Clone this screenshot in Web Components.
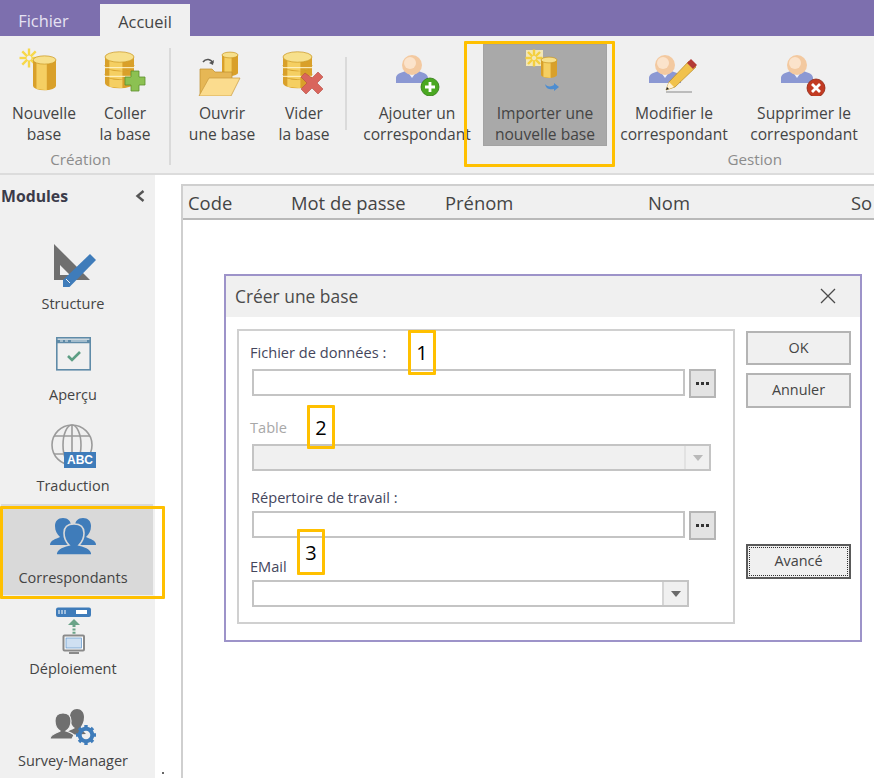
<!DOCTYPE html>
<html lang="fr"><head><meta charset="utf-8"><title>Créer une base</title>
<style>
html,body{margin:0;padding:0;background:#fff;overflow:hidden}
body{font-family:"Open Sans","Noto Sans",sans-serif;color:#444}
</style></head><body>
<x-app></x-app>
<script>
const CYL=(x,y,w,h)=>{const ry=w*0.18;return `<path d="M${x} ${y}V${y+h}A${w/2} ${ry} 0 0 0 ${x+w} ${y+h}V${y}Z" fill="#d9a02a"/><path d="M${x+w*.15} ${y+1}V${y+h+ry*.7}L${x+w*.6} ${y+h+ry}V${y+1}Z" fill="#f5cf62"/><ellipse cx="${x+w/2}" cy="${y}" rx="${w/2}" ry="${ry}" fill="#f7e08c" stroke="#c9951f" stroke-width=".7"/>`};
const STACK=(x,y,w,h)=>{const s=h/3;let o='';for(let i=2;i>=0;i--){o+=CYL(x,y+i*s,w,s)}return o+`<path d="M${x} ${y+s+2}h${w}M${x} ${y+2*s+2}h${w}" stroke="#fff6d0" stroke-width="1"/>`};
const STAR=(cx,cy,r,c='#f7d84a')=>{let o='';for(let i=0;i<8;i++){const a=i*Math.PI/4;o+=`<path d="M${cx+Math.cos(a)*r*.25} ${cy+Math.sin(a)*r*.25}L${cx+Math.cos(a)*r} ${cy+Math.sin(a)*r}" stroke="${c}" stroke-width="2.4"/>`}return o};
const PERSON=(cx,cy)=>`<path d="M${cx-16} ${cy+18}v-5c0-3 3-5 7-6l5-2h8l5 2c4 1 7 3 7 6v5z" fill="#8b98d3"/><path d="M${cx-5} ${cy+6}L${cx} ${cy+13}L${cx+5} ${cy+6}z" fill="#eef0fa"/><circle cx="${cx}" cy="${cy}" r="10" fill="#f3c9a0"/><circle cx="${cx-2}" cy="${cy-2}" r="6" fill="#fbe3cb"/>`;
const ic=(vb,w,h,body)=>`<svg slot="icon" viewBox="${vb}" width="${w}" height="${h}" aria-hidden="true">${body}</svg>`;
const RIB={
 nouvelle:ic('14 46 60 50',60,50,STAR(29,58,9.5)+CYL(33,60,23,26)),
 coller:ic('95 46 60 50',60,50,STACK(105,57,29,26)+`<path d="M131 71h8v6h6v8h-6v6h-8v-6h-6v-8h6z" fill="#8cc152" stroke="#5e8f2f" stroke-width=".8"/>`),
 ouvrir:ic('192 46 60 50',60,50,`<path d="M203 62c3-4 8-3 10 1" fill="none" stroke="#555" stroke-width="1.6"/><path d="M214 60l-1 5-4-2z" fill="#555"/>`+CYL(222,55,16,18)+`<path d="M200 96V69h12l3 3h17v7H211z" fill="#e6b755" stroke="#bd8c2c" stroke-width=".7"/><path d="M199 96l10-18h31l-9 18z" fill="#fbdc8e" stroke="#c99a3c" stroke-width=".7"/>`),
 vider:ic('274 46 60 50',60,50,STACK(283,57,29,26)+`<path d="M305 77l7 5 6-6 5 5-6 6 6 6-5 5-6-6-6 6-5-5 6-6-6-6z" fill="#d9655c" stroke="#b5493f" stroke-width=".6" transform="translate(0 -4)"/>`),
 ajouter:ic('387 46 60 50',60,50,PERSON(412,65)+`<circle cx="430" cy="87" r="9" fill="#4aa821" stroke="#2f7a12" stroke-width=".8"/><path d="M425 87h10M430 82v10" stroke="#fff" stroke-width="2.8"/>`),
 importer:ic('515 46 60 50',60,50,`<rect x="526" y="52" width="17" height="16" fill="#f3e7b5"/>`+STAR(534,60,8.5,'#f4cf3f')+CYL(541,62,16,15)+`<path d="M545 86c2 3 6 3 9 1v-2l5 4-5 4v-2c-4 1-8 0-9-5z" fill="#4d8dd0"/>`),
 modifier:ic('644 46 60 50',60,50,PERSON(665,65)+`<path d="M666 90l3-8 20-21 7 6-21 20z" fill="#f1c24c" stroke="#b78a24" stroke-width=".7"/><path d="M687 63l4-4 6 6-4 4z" fill="#b33b36"/><path d="M666 90l3-8 5 5z" fill="#fff1d4"/><path d="M666 92h26" stroke="#888" stroke-width="1"/><path d="M666 90l1-3 2 2z" fill="#222"/>`),
 supprimer:ic('774 46 60 50',60,50,PERSON(797,65)+`<circle cx="816" cy="88" r="9" fill="#c23a22" stroke="#8f2612" stroke-width=".8"/><path d="M812 84l8 8M820 84l-8 8" stroke="#fff" stroke-width="2.8"/>`)
};
const B='#3f7cba',G='#6f6f6f';
const MOD={
 structure:ic('43 240 60 50',60,50,`<path fill-rule="evenodd" d="M54 244L90 280H54ZM60 265V275H70Z" fill="${G}"/><path d="M63 287V280L90 254 96 260 69.5 287Z" fill="${B}"/><path d="M66 279l4 4" stroke="#f0f0f0" stroke-width="1"/>`),
 apercu:ic('43 332 60 50',60,50,`<rect x="56.8" y="338.8" width="33.4" height="32" fill="none" stroke="#5f8ba8" stroke-width="1.6"/><path d="M57 342.5h33" stroke="#5f8ba8" stroke-width="3.4"/><path d="M60 342h3M65 342h3M71 342h16" stroke="#e8eef2" stroke-width="1"/><path d="M68 357l4 4 8-8" fill="none" stroke="#5d9e84" stroke-width="2.6"/>`),
 traduction:ic('43 424 60 50',60,50,`<g fill="none" stroke="#9b9b9b" stroke-width="1.6"><circle cx="72" cy="447" r="20"/><ellipse cx="72" cy="447" rx="9" ry="20"/><path d="M54 438h36M54 456h36M72 427v40"/></g><rect x="64" y="454" width="32" height="16" fill="${B}"/><text x="80" y="466" text-anchor="middle" font-family="Liberation Sans" font-weight="700" font-size="12" fill="#fff">ABC</text>`),
 correspondants:ic('43 516 60 50',60,50,`<g fill="${B}"><path d="M50 547c0-5 6-6 10-8-3-3-5-6-5-11 0-5 3-8 8-8s8 3 8 8c0 5-2 9-5 11l10 8z"/><path d="M96 547c0-5-6-6-10-8 3-3 5-6 5-11 0-5-3-8-8-8s-8 3-8 8c0 5 2 9 5 11l-10 8z"/><path d="M56 557c0-6 5-8 13-10-3-3-5-7-5-12 0-6 4-9 10-9s10 3 10 9c0 5-2 9-5 12 8 2 13 4 13 10z" stroke="#d9d9d9" stroke-width="1.6"/></g>`),
 deploiement:ic('43 606 60 50',60,50,`<rect x="56" y="608.5" width="35" height="9.5" rx="2" fill="${B}"/><path d="M59 611v4M62 611v4M65 611v4" stroke="#fff" stroke-width="1"/><rect x="76" y="611" width="11" height="4" fill="#fff"/><path d="M68 626l6-6 6 6z" fill="#6aa388"/><path d="M74 626v9" stroke="#6aa388" stroke-width="3" stroke-dasharray="2 1.4"/><rect x="63.5" y="636.5" width="20.5" height="15" rx="1" fill="#fff" stroke="#8a8a8a" stroke-width="2"/><rect x="66" y="639" width="15.5" height="10" fill="#cfe0f2" stroke="#5c93c9" stroke-width=".7"/><path d="M69 654h10" stroke="#8a8a8a" stroke-width="2"/>`),
 survey:ic('43 698 60 50',60,50,`<g fill="${G}"><path d="M66 736c0-4 6-5 9-7-3-2-5-6-5-11 0-5 3-8 7-8s7 3 7 8c0 5-2 8-4 11l6 6z"/><path d="M50 740c0-5 7-6 10-8-3-2-5-5-5-10 0-5 3-8 8-8s8 3 8 8c0 5-2 8-5 10 3 1 6 2 8 4l-2 4z" stroke="#f0f0f0" stroke-width="1.2"/></g><g transform="translate(86 736)"><circle r="6.3" fill="none" stroke="${B}" stroke-width="4"/><g stroke="${B}" stroke-width="3.4"><path d="M0-10V-7M0 7v3M-10 0h3M7 0h3M-7-7l2 2M5 5l2 2M7-7l-2 2M-5 5l-2 2"/></g></g>`)
};
function def(name,css,html){
 customElements.define(name,class extends HTMLElement{
  constructor(){super();const r=this.attachShadow({mode:'open'});r.innerHTML=`<style>${css}</style>${html}`}
 });
}
def('x-tab',`:host{display:flex;align-items:center;justify-content:center;box-sizing:border-box;height:32px;font-size:16.4px;color:#e6e2f2;width:var(--w,auto)}
:host([active]){background:#f0f0f0;color:#444;padding-top:3px}`,`<slot></slot>`);
def('x-ribbon-button',`:host{display:flex;flex-direction:column;align-items:center;height:102px;color:#444;font-size:15.6px;line-height:21px;text-align:center;white-space:nowrap}
:host([hot]){background:#a9a9a9;box-shadow:inset 0 0 0 1px #a3a3a3}
.i{height:57px;display:flex;justify-content:center;margin-top:var(--it,2px)}
.t{margin-top:var(--tt,0px)}`,`<div class="i"><slot name="icon"></slot></div><div class="t"><slot></slot></div>`);
def('x-ribbon-group',`:host{display:flex;flex-direction:column;height:137px;flex:none;box-sizing:border-box}
.r{display:flex;height:113px;align-items:flex-start;padding-top:8px;box-sizing:border-box}
.l{font-size:15.2px;color:#8c8c8c;line-height:20px;text-align:var(--lalign,center);padding:0 var(--lpad,0) 0 0}`,`<div class="r"><slot></slot></div><div class="l"><slot name="label"></slot></div>`);
def('x-ribbon',`:host{display:flex;height:139px;background:#f0f0f0;box-sizing:border-box;border-bottom:2px solid #dcdcdc;flex:none}`,`<slot></slot>`);
def('x-sep',`:host{display:block;width:2px;background:#dadada;flex:none;margin-top:var(--st,12px);height:var(--sh,117px)}`,``);
def('x-module',`:host{display:flex;flex-direction:column;align-items:center;height:92px;font-size:14.5px;color:#444;box-sizing:border-box;padding:10px 8px 0 0;margin-left:1px;width:152px}
:host([active]){background:#d9d9d9}
.i{height:53px}.t{line-height:21px;white-space:nowrap}`,`<div class="i"><slot name="icon"></slot></div><div class="t"><slot></slot></div>`);
def('x-sidebar',`:host{display:flex;flex-direction:column;width:155px;flex:none;background:#f0f0f0}
.h{display:flex;justify-content:space-between;align-items:center;height:55px;box-sizing:border-box;padding:0 9px 12px 1px;font-weight:700;font-size:15.8px;color:#3b3b4a}
svg{display:block}`,`<div class="h"><span>Modules</span><svg width="12" height="14" viewBox="0 0 12 14"><path d="M9.5 2L3.5 7l6 5" fill="none" stroke="#555" stroke-width="2.4"/></svg></div><slot></slot>`);
def('x-grid',`:host{display:block;flex:1;margin:9px 0 0 26px;border-left:2px solid #cfcfcf;overflow:hidden}
.h{display:flex;height:36px;align-items:center;box-sizing:border-box;background:#f0f0f0;border-top:2px solid #cfcfcf;border-bottom:2px solid #b9b9b9;padding-top:1px;font-size:18.4px;color:#444;white-space:nowrap}
span{flex:none}`,`<div class="h"><span style="width:108px;padding-left:5px;box-sizing:border-box">Code</span><span style="width:154px">Mot de passe</span><span style="width:203px">Prénom</span><span style="width:203px">Nom</span><span>So</span></div>`);
def('x-input',`:host{display:block;box-sizing:border-box;height:27px;width:var(--w,433px);background:#fff;border:2px solid #c4c4c4}`,``);
def('x-browse',`:host{display:flex;align-items:center;justify-content:center;box-sizing:border-box;width:27px;height:29px;background:#e3e3e3;border:2px solid #b5b5b5;margin-left:4px}
svg{display:block}`,`<svg width="14" height="4" viewBox="0 0 14 4"><g fill="#333"><rect x="0" y="0" width="3" height="3"/><rect x="5" y="0" width="3" height="3"/><rect x="10" y="0" width="3" height="3"/></g></svg>`);
def('x-select',`:host{display:flex;box-sizing:border-box;height:27px;width:var(--w,437px);border:2px solid #c4c4c4;background:#fff}
:host([disabled]){background:#f0f0f0}
.f{flex:1}.a{width:23px;border-left:2px solid #d5d5d5;background:#f0f0f0;display:flex;align-items:center;justify-content:center}
:host([disabled]) .a{border-left-color:#e2e2e2}
i{display:block;border:5px solid transparent;border-top:6px solid #6a6a6a;border-bottom:0}
:host([disabled]) i{border-top-color:#b9b9b9}`,`<div class="f"></div><div class="a"><i></i></div>`);
def('x-field',`:host{display:block;padding-left:var(--pl,11px);margin-top:var(--mt,0)}
.l{font-size:14.6px;line-height:20px;color:#44465c;white-space:nowrap;margin-bottom:var(--mb,7px);margin-left:var(--ll,0)}
:host([disabled]) .l{color:#a8a8a8}
.c{display:flex;align-items:flex-start;padding-left:2px}`,`<div class="l"><slot name="label"></slot></div><div class="c"><slot></slot></div>`);
def('x-button',`:host{display:flex;align-items:center;justify-content:center;box-sizing:border-box;width:105px;height:var(--bh,35px);background:#f0f0f0;border:2px solid #b4b4b4;padding-bottom:2px;font-size:14.4px;color:#444;margin-bottom:var(--bm,8px);margin-top:var(--tm,0)}
:host([default]){border-color:#5a5a5a;position:relative}
.d{display:none}
:host([default]) .d{display:block;position:absolute;inset:1px;border:1.5px dotted #333}`,`<div class="d"></div><slot></slot>`);
def('x-fieldset',`:host{display:block;box-sizing:border-box;width:498px;height:295px;border:2px solid #d0d0d0;background:#fff;padding-top:11px;flex:none}`,`<slot></slot>`);
def('x-dialog',`:host{display:block;position:absolute;left:224px;top:274px;width:638px;height:368px;box-sizing:border-box;border:2px solid #9d93c9;background:#fff}
.t{display:flex;justify-content:space-between;align-items:center;box-sizing:border-box;height:41px;background:#f0f0f0;padding:0 24px 2px 9px;font-size:17.4px;color:#4b4b4b}
.b{display:flex;gap:11px;padding:12px 0 0 11px}
.s{display:flex;flex-direction:column;padding-top:2px}
svg{display:block}`,`<div class="t"><span>Créer une base</span><svg width="16" height="16" viewBox="0 0 16 16"><path d="M1 1l14 14M15 1L1 15" stroke="#4a4a4a" stroke-width="1.3"/></svg></div>
<div class="b"><slot></slot><div class="s"><slot name="side"></slot></div></div>`);
def('x-callout',`:host{position:absolute;box-sizing:border-box;border:3px solid #ffc000;border-radius:1px;display:flex;align-items:center;justify-content:center;font-family:"Open Sans",sans-serif;font-size:20px;color:#000;pointer-events:none}`,`<slot></slot>`);
def('x-dot',`:host{position:absolute;left:162px;top:772px;width:2px;height:2px;border-radius:50%;background:#333}`,``);
def('x-app',`:host{display:flex;flex-direction:column;width:874px;height:778px;position:relative;overflow:hidden;background:#fff}
.top{display:flex;height:36px;background:#7d6fae;flex:none;align-items:flex-end;box-sizing:border-box}
.main{display:flex;flex:1;min-height:0}`,`
<div class="top"><x-tab style="--w:87px;align-self:flex-start;margin:4px 13px 0 0">Fichier</x-tab><x-tab active style="--w:90px">Accueil</x-tab></div>
<x-ribbon>
 <x-ribbon-group style="width:169px;padding-left:4px;--lpad:12px"><x-ribbon-button style="width:80px">${RIB.nouvelle}Nouvelle<br>base</x-ribbon-button><x-ribbon-button style="width:82px">${RIB.coller}Coller<br>la base</x-ribbon-button><span slot="label">Création</span></x-ribbon-group>
 <x-sep></x-sep>
 <x-ribbon-group style="width:174px;padding-left:1px"><x-ribbon-button style="width:100px">${RIB.ouvrir}Ouvrir<br>une base</x-ribbon-button><x-ribbon-button style="width:64px">${RIB.vider}Vider<br>la base</x-ribbon-button></x-ribbon-group>
 <x-sep style="--st:21px;--sh:73px"></x-sep>
 <x-ribbon-group style="width:527px;--lalign:right;--lpad:92px"><x-ribbon-button style="width:124px;margin:0 4px 0 8px">${RIB.ajouter}Ajouter un<br>correspondant</x-ribbon-button><x-ribbon-button hot style="width:124px;--it:0px;--tt:2px">${RIB.importer}Importer une<br>nouvelle base</x-ribbon-button><x-ribbon-button style="width:124px;margin-left:5px">${RIB.modifier}Modifier le<br>correspondant</x-ribbon-button><x-ribbon-button style="width:124px;margin-left:6px">${RIB.supprimer}Supprimer le<br>correspondant</x-ribbon-button><span slot="label">Gestion</span></x-ribbon-group>
</x-ribbon>
<div class="main">
 <x-sidebar>
  <x-module>${MOD.structure}Structure</x-module>
  <x-module>${MOD.apercu}Aperçu</x-module>
  <x-module>${MOD.traduction}Traduction</x-module>
  <x-module active>${MOD.correspondants}Correspondants</x-module>
  <x-module>${MOD.deploiement}Déploiement</x-module>
  <x-module>${MOD.survey}Survey-Manager</x-module>
 </x-sidebar>
 <x-grid></x-grid>
</div>
<x-dialog>
 <x-fieldset>
  <x-field><span slot="label">Fichier de données :</span><x-input></x-input><x-browse></x-browse></x-field>
  <x-field disabled style="--mt:19px"><span slot="label">Table</span><x-select disabled style="--w:459px"></x-select></x-field>
  <x-field style="--mt:16px;--mb:4px;--ll:1px"><span slot="label">Répertoire de travail :</span><x-input></x-input><x-browse></x-browse></x-field>
  <x-field style="--mt:16px;--mb:4px"><span slot="label">EMail</span><x-select></x-select></x-field>
 </x-fieldset>
 <x-button slot="side" style="--bh:34px">OK</x-button>
 <x-button slot="side">Annuler</x-button>
 <x-button slot="side" default style="--tm:128px">Avancé</x-button>
</x-dialog>
<x-callout style="left:464px;top:41px;width:151px;height:126px"></x-callout>
<x-callout style="left:0;top:506px;width:165px;height:93px"></x-callout>
<x-callout style="left:408px;top:330px;width:28px;height:45px">1</x-callout>
<x-callout style="left:307px;top:405px;width:28px;height:44px">2</x-callout>
<x-callout style="left:297px;top:529px;width:28px;height:46px">3</x-callout>
<x-dot></x-dot>
`);
</script>
</body></html>
